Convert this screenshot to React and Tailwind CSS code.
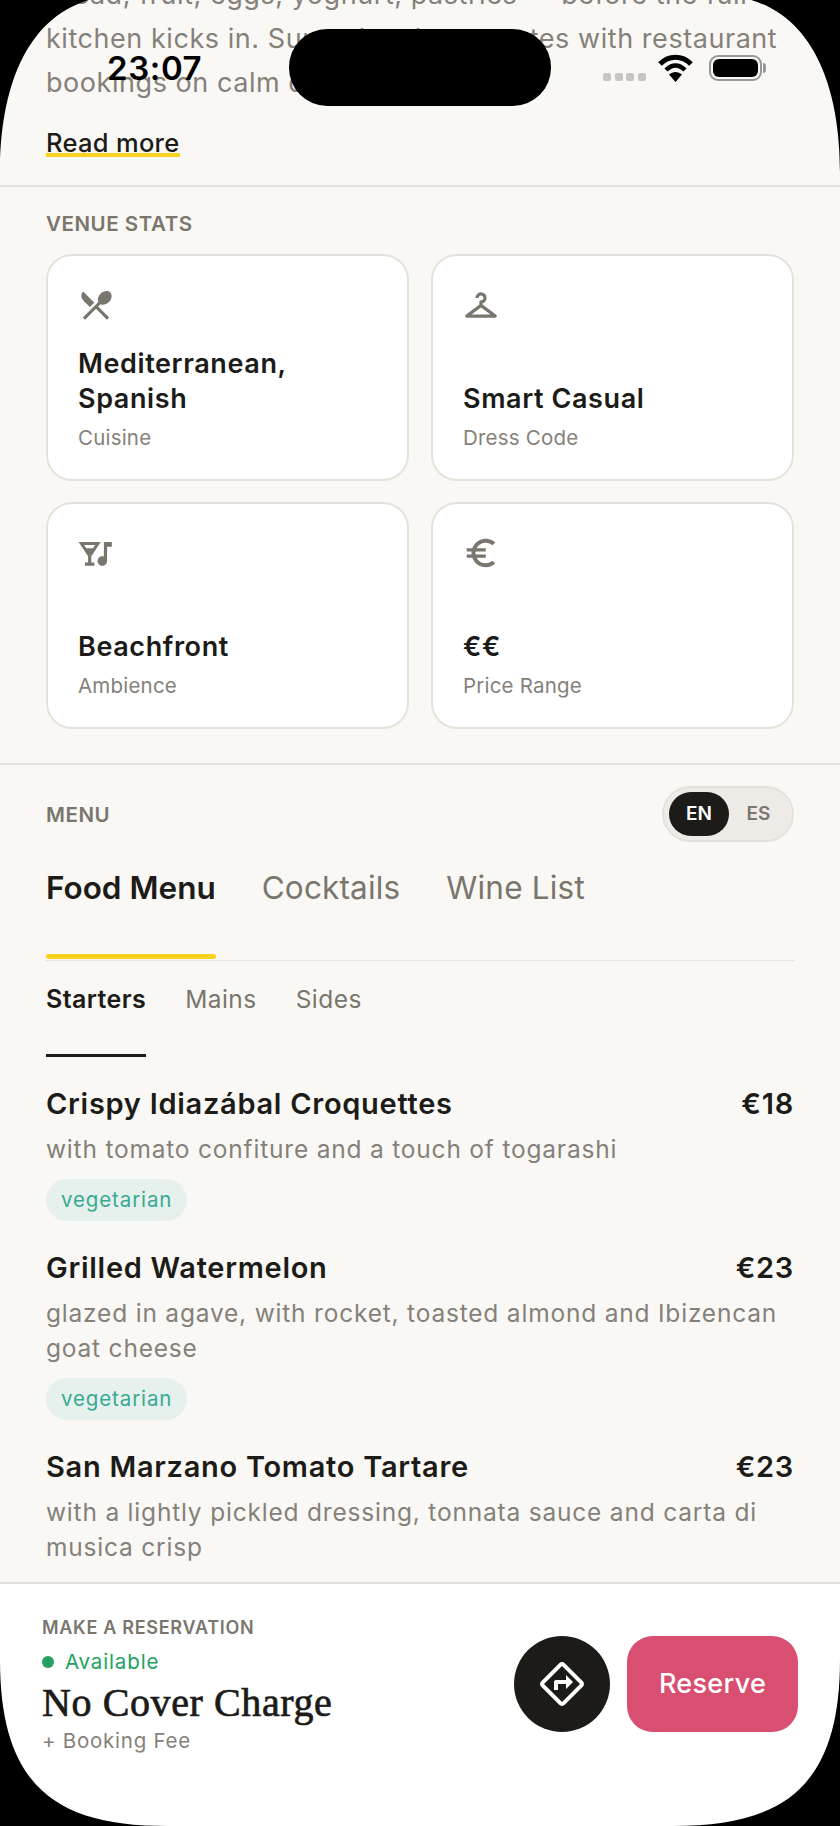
import React from 'react';
import { MdRestaurantMenu, MdOutlineCheckroom, MdOutlineNightlife, MdOutlineEuroSymbol, MdOutlineDirections } from 'react-icons/md';

const stats = [
  { icon: MdRestaurantMenu, value: 'Mediterranean, Spanish', label: 'Cuisine' },
  { icon: MdOutlineCheckroom, value: 'Smart Casual', label: 'Dress Code' },
  { icon: MdOutlineNightlife, value: 'Beachfront', label: 'Ambience' },
  { icon: MdOutlineEuroSymbol, value: '€€', label: 'Price Range' },
];

const dishes = [
  { name: 'Crispy Idiazábal Croquettes', price: '€18', desc: 'with tomato confiture and a touch of togarashi', tag: 'vegetarian' },
  { name: 'Grilled Watermelon', price: '€23', desc: 'glazed in agave, with rocket, toasted almond and Ibizencan goat cheese', tag: 'vegetarian' },
  { name: 'San Marzano Tomato Tartare', price: '€23', desc: 'with a lightly pickled dressing, tonnata sauce and carta di musica crisp' },
];

function StatCard({ icon: Icon, value, label }) {
  return (
    <div className="h-[227px] rounded-[26px] border-2 border-[#e5e2dc] bg-white pl-[30px] pr-6 pt-[30px] flex flex-col">
      <Icon className="w-[38px] h-[38px] -ml-[1px] text-[#7a756d]" />
      <div className="mt-auto text-[27px] leading-[35px] font-semibold tracking-[0.6px] text-[#1c1b18]">{value}</div>
      <div className="mt-[8px] mb-[27px] text-[20.5px] leading-[28px] tracking-[0.2px] text-[#85817a]">{label}</div>
    </div>
  );
}

function Dish({ name, price, desc, tag }) {
  return (
    <div className="mb-[29px]">
      <div className="flex justify-between text-[29px] leading-[35px] font-semibold tracking-[0.72px] text-[#1c1b18]">
        <span>{name}</span>
        <span>{price}</span>
      </div>
      <p className="mt-[11px] text-[24.5px] leading-[35px] tracking-[0.8px] text-[#85817a]">{desc}</p>
      {tag && (
        <div className="mt-[12px] flex w-fit items-center h-[42px] px-[15px] rounded-full bg-[#e6f0ec] text-[20.5px] tracking-[0.87px] text-[#38a993]">{tag}</div>
      )}
    </div>
  );
}

function StatusBar() {
  return (
    <>
      <svg className="absolute inset-0 pointer-events-none" width="840" height="1826" viewBox="0 0 840 1826">
        <path
          fill="#000"
          fillRule="evenodd"
          d="M0 0H840V1826H0Z M0 172C0 75 35 -5 125 -5H715C805 -5 840 75 840 172V1660C840 1790 780 1826 673 1826H167C60 1826 0 1790 0 1660Z"
        />
      </svg>
      <div className="absolute left-[289px] top-[29px] w-[262px] h-[77px] rounded-[38px] bg-black" />
      <div className="absolute left-[107px] top-[48px] text-[33px] leading-[40px] font-semibold tracking-[0.6px] text-black">23:07</div>
      <div className="absolute left-[603px] top-[73px] flex gap-[3.5px]">
        {[0, 1, 2, 3].map(i => <div key={i} className="w-2 h-2 rounded-[2px] bg-[#c8c6c3]" />)}
      </div>
      <svg className="absolute left-[658px] top-[54px]" width="35" height="28" viewBox="0 0 35 28">
        <path d="M2 10C11 1 24 1 33 10" fill="none" stroke="#000" strokeWidth="5" />
        <path d="M8 16C14 10 21 10 27 16" fill="none" stroke="#000" strokeWidth="4.5" />
        <path d="M17.5 28L11 20.5C15 17 20 17 24 20.5Z" fill="#000" />
      </svg>
      <div className="absolute left-[709px] top-[55px] w-[53px] h-[26px] rounded-[9px] border-2 border-[#999] p-[2px]">
        <div className="w-full h-full rounded-[6px] bg-black" />
      </div>
      <div className="absolute left-[763px] top-[63px] w-[3px] h-[10px] rounded-r-full bg-[#999]" />
    </>
  );
}

export default function App() {
  return (
    <div className="relative w-[840px] h-[1826px] overflow-hidden bg-[#faf8f4] flex flex-col font-['Inter',sans-serif]">
      <div className="flex-1 min-h-0 overflow-hidden">
        <div className="-mt-[27px] px-[46px]">
          <p className="text-[27px] leading-[44px] tracking-[0.55px] text-[#85817a] whitespace-nowrap">
            <span className="block">bread, fruit, eggs, yoghurt, pastries — before the full</span>
            <span className="block">kitchen kicks in. Sunny lunch competes with restaurant</span>
            <span className="block">bookings on calm days.</span>
          </p>
          <div className="mt-[27px] inline-block align-top border-b-4 border-[#fad21e] text-[25.5px] leading-[21px] font-medium tracking-[0.3px] text-[#1c1b18]">Read more</div>
        </div>

        <div className="mt-[28px] border-t-2 border-[#e5e2dc] px-[46px] pt-[23px] pb-[34px]">
          <div className="text-[20.5px] leading-[28px] font-semibold tracking-[0.55px] text-[#7a756d]">VENUE STATS</div>
          <div className="mt-[16px] grid grid-cols-2 gap-x-[22px] gap-y-[21px]">
            {stats.map(s => <StatCard key={s.label} {...s} />)}
          </div>
        </div>

        <div className="border-t-2 border-[#e5e2dc] px-[46px] pt-[21px]">
          <div className="flex items-center justify-between">
            <div className="mt-[2px] text-[20.5px] leading-[28px] font-semibold tracking-[0.55px] text-[#7a756d]">MENU</div>
            <div className="flex items-center w-[132px] h-[56px] rounded-full border-2 border-[#e5e2dc] bg-[#eeebe7] pl-[5px] pr-[4px]">
              <div className="w-[60px] h-[44px] rounded-full bg-[#1c1b18] flex items-center justify-center text-[19px] font-semibold text-white">EN</div>
              <div className="flex-1 text-center text-[19px] font-semibold text-[#7a756d]">ES</div>
            </div>
          </div>

          <div className="mt-[24px] flex gap-[46px] border-b border-[#e8e5df] h-[95px] text-[31.5px] leading-[44px]">
            <div className="h-[93px] flex flex-col justify-between font-semibold text-[#1c1b18]">
              Food Menu
              <div className="h-[5px] rounded-full bg-[#fad21e]" />
            </div>
            <div className="tracking-[0.15px] text-[#7a756d]">Cocktails</div>
            <div className="tracking-[0.2px] text-[#7a756d]">Wine List</div>
          </div>

          <div className="mt-[21px] flex gap-[39px] leading-[34px]">
            <div className="h-[75px] border-b-[3px] border-[#1c1b18] text-[25px] tracking-[0.4px] font-semibold text-[#1c1b18]">Starters</div>
            <div className="text-[24.5px] tracking-[0.45px] text-[#7a756d]">Mains</div>
            <div className="text-[24.5px] tracking-[0.45px] text-[#7a756d]">Sides</div>
          </div>

          <div className="mt-[29px]">
            {dishes.map(d => <Dish key={d.name} {...d} />)}
          </div>
        </div>
      </div>

      <div className="h-[244px] shrink-0 border-t-2 border-[#e5e2dc] bg-white px-[42px] flex justify-between">
        <div className="pt-[32px]">
          <div className="text-[18px] leading-[24px] font-semibold tracking-[0.7px] text-[#7a756d]">MAKE A RESERVATION</div>
          <div className="mt-[10px] flex items-center gap-[11px] text-[20.5px] leading-[24px] tracking-[0.85px] text-[#22a15f]">
            <span className="w-3 h-3 rounded-full bg-[#22a15f]" />
            Available
          </div>
          <div className="mt-[6px] font-['Liberation_Serif',serif] text-[40px] leading-[46px] tracking-[0.6px] [-webkit-text-stroke:0.7px_#1c1b18] text-[#1c1b18]">No Cover Charge</div>
          <div className="mt-[2px] text-[20.5px] leading-[26px] tracking-[0.75px] text-[#85817a]">+ Booking Fee</div>
        </div>
        <div className="mt-[52px] flex gap-[17px] h-[96px]">
          <div className="w-[96px] h-[96px] rounded-full bg-[#1c1b18] flex items-center justify-center">
            <MdOutlineDirections className="w-[48px] h-[48px] text-white" />
          </div>
          <div className="w-[171px] h-[96px] rounded-[26px] bg-[#d84f72] flex items-center justify-center text-[27px] font-medium tracking-[0.3px] text-white">Reserve</div>
        </div>
      </div>

      <StatusBar />
    </div>
  );
}
